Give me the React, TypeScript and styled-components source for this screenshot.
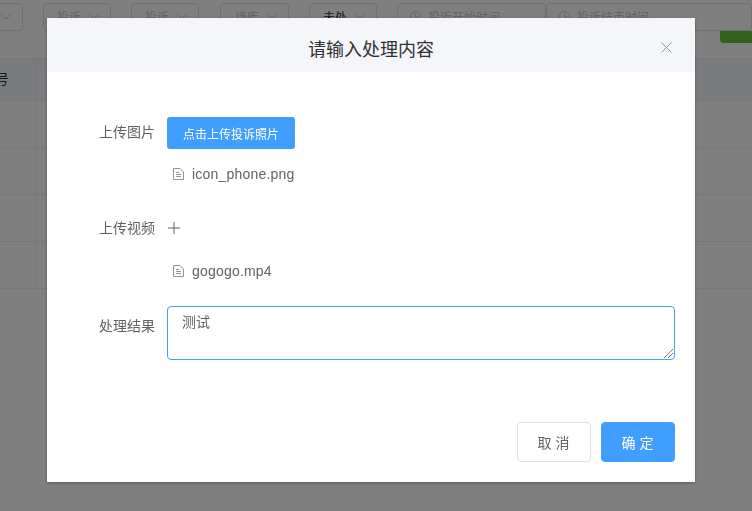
import React from 'react';
import styled, { createGlobalStyle } from 'styled-components';

const GlobalStyle = createGlobalStyle`
  html, body {
    margin: 0;
    padding: 0;
    height: 100%;
    overflow: hidden;
    background: #fff;
    font-family: "Liberation Sans", "Noto Sans CJK SC", sans-serif;
    color: #606266;
  }
`;

const Page = styled.div`
  width: 752px;
  height: 511px;
  overflow: hidden;
`;

const FilterBar = styled.div`
  display: flex;
  align-items: center;
  height: 28px;
  padding-top: 3px;
  margin-left: -45px;
  width: 900px;
`;

const Select = styled.div<{ $width: number; $gap: number; $active?: boolean }>`
  box-sizing: border-box;
  display: flex;
  align-items: center;
  justify-content: flex-end;
  gap: 7px;
  flex: none;
  width: ${(p) => p.$width}px;
  height: 28px;
  margin-right: ${(p) => p.$gap}px;
  padding: 0 10px 2px 0;
  border: 1px solid #dcdfe6;
  border-radius: 4px;
  font-size: 12px;
  color: ${(p) => (p.$active ? '#303133' : '#c0c4cc')};
`;

const DateInput = styled.div<{ $width: number }>`
  box-sizing: border-box;
  display: flex;
  align-items: center;
  gap: 7px;
  flex: none;
  width: ${(p) => p.$width}px;
  height: 28px;
  padding: 0 0 2px 12px;
  border: 1px solid #dcdfe6;
  border-radius: 4px;
  font-size: 12px;
  color: #c0c4cc;
`;

const ActionRow = styled.div`
  display: flex;
  justify-content: flex-end;
  height: 12px;
  margin-bottom: 15px;
`;

const GreenButton = styled.div`
  width: 32px;
  height: 12px;
  background: #67c23a;
  border-radius: 0 0 0 4px;
`;

const Table = styled.div`
  border-top: 1px solid #ebeef5;
`;

const TableRow = styled.div<{ $head?: boolean }>`
  display: grid;
  grid-template-columns: 36px 1fr;
  height: ${(p) => (p.$head ? 41 : 46)}px;
  background: ${(p) => (p.$head ? '#f5f7fa' : '#fff')};
  border-bottom: 1px solid #ebeef5;
`;

const Cell = styled.div`
  display: flex;
  align-items: center;
  justify-content: flex-end;
  overflow: hidden;
  font-size: 14px;
  color: #303133;
  border-right: 1px solid #ebeef5;
  padding: 0 26px 3px 0;
  white-space: nowrap;
`;

const Overlay = styled.div`
  position: fixed;
  inset: 0;
  background: rgba(0, 0, 0, 0.5);
`;

const Dialog = styled.div`
  position: absolute;
  left: 47px;
  top: 18px;
  width: 648px;
  height: 464px;
  display: flex;
  flex-direction: column;
  background: #fff;
  box-shadow: 0 1px 3px rgba(0, 0, 0, 0.3);
`;

const DialogHeader = styled.div`
  position: relative;
  flex: none;
  height: 54px;
  display: flex;
  align-items: center;
  justify-content: center;
  padding-top: 6px;
  box-sizing: border-box;
  background: #f5f6fa;
  font-size: 18px;
  color: #303133;
`;

const CloseButton = styled.svg`
  position: absolute;
  right: 23px;
  top: 24px;
  width: 11px;
  height: 11px;
`;

const DialogBody = styled.div`
  flex: 1;
  display: flex;
  flex-direction: column;
  padding: 45px 20px 0 0;
`;

const FormRow = styled.div<{ $mb: number }>`
  display: grid;
  grid-template-columns: 120px 1fr;
  margin-bottom: ${(p) => p.$mb}px;
`;

const Label = styled.label<{ $mt?: number }>`
  box-sizing: border-box;
  height: 30px;
  margin-top: ${(p) => p.$mt ?? 0}px;
  padding-right: 12px;
  line-height: 30px;
  text-align: right;
  font-size: 14px;
  color: #606266;
`;

const UploadButton = styled.button`
  justify-self: start;
  width: 128px;
  height: 32px;
  padding: 0;
  border: 0;
  border-radius: 3px;
  background: #409eff;
  color: #fff;
  font: inherit;
  font-size: 12px;
`;

const PlusIcon = styled.svg`
  width: 12px;
  height: 12px;
  margin: 9px 0 0 1px;
  display: block;
`;

const FileItem = styled.div<{ $mt: number }>`
  grid-column: 2;
  display: flex;
  align-items: center;
  height: 25px;
  margin-top: ${(p) => p.$mt}px;
  padding-left: 6px;
  gap: 8px;
  font-size: 14px;
  letter-spacing: 0.2px;
  color: #606266;
`;

const Text = styled.div`
  box-sizing: border-box;
  width: 508px;
  height: 54px;
  padding: 5px 14px;
  border: 1px solid #409eff;
  border-radius: 4px;
  font-size: 14px;
  line-height: 21px;
  color: #606266;
  position: relative;
`;

const ResizeGrip = styled.svg`
  position: absolute;
  right: 1px;
  bottom: 1px;
  width: 9px;
  height: 9px;
`;

const DialogFooter = styled.div`
  display: flex;
  justify-content: flex-end;
  gap: 10px;
  padding: 0 20px 20px 0;
`;

const FooterButton = styled.button<{ $primary?: boolean }>`
  box-sizing: border-box;
  width: 74px;
  height: 40px;
  padding: 0 0 0 3px;
  border: 1px solid ${(p) => (p.$primary ? '#409eff' : '#dcdfe6')};
  border-radius: 4px;
  background: ${(p) => (p.$primary ? '#409eff' : '#fff')};
  color: ${(p) => (p.$primary ? '#fff' : '#606266')};
  font: inherit;
  font-size: 14px;
  letter-spacing: 4px;
`;

const Chevron = () => (
  <svg width="12" height="8" viewBox="0 0 12 8" fill="none" stroke="#c0c4cc">
    <path d="M.5 1L6 7l5.5-6" />
  </svg>
);

const Clock = () => (
  <svg width="11" height="11" viewBox="0 0 11 11" fill="none" stroke="#c0c4cc">
    <circle cx="5.5" cy="5.5" r="5" />
    <path d="M5.5 2.5V6H8.5" />
  </svg>
);

const FileIcon = () => (
  <svg width="11" height="12" viewBox="0 0 11 12" fill="none" stroke="#909399">
    <path d="M.5.5H7L10.5 4V11.5H.5z" />
    <path d="M3 4.5H6M3 6.5H8M3 8.5H8" />
  </svg>
);

export default function App() {
  return (
    <Page>
      <GlobalStyle />
      <FilterBar>
        <Select $width={68} $gap={20}><Chevron /></Select>
        <Select $width={68} $gap={20}>投诉<Chevron /></Select>
        <Select $width={68} $gap={21}>投诉<Chevron /></Select>
        <Select $width={69} $gap={20}>场库<Chevron /></Select>
        <Select $width={68} $gap={20} $active>未处<Chevron /></Select>
        <DateInput $width={149}><Clock />投诉开始时间</DateInput>
        <DateInput $width={206}><Clock />投诉结束时间</DateInput>
      </FilterBar>
      <ActionRow><GreenButton /></ActionRow>
      <Table>
        <TableRow $head><Cell>序号</Cell><div /></TableRow>
        <TableRow><Cell /><div /></TableRow>
        <TableRow><Cell /><div /></TableRow>
        <TableRow><Cell /><div /></TableRow>
        <TableRow><Cell /><div /></TableRow>
      </Table>
      <Overlay>
        <Dialog>
          <DialogHeader>
            请输入处理内容
            <CloseButton viewBox="0 0 11 11" fill="none" stroke="#909399">
              <path d="M.5.5l10 10M10.5.5l-10 10" />
            </CloseButton>
          </DialogHeader>
          <DialogBody>
            <FormRow $mb={27}>
              <Label>上传图片</Label>
              <UploadButton>点击上传投诉照片</UploadButton>
              <FileItem $mt={12}><FileIcon />icon_phone.png</FileItem>
            </FormRow>
            <FormRow $mb={23}>
              <Label>上传视频</Label>
              <PlusIcon viewBox="0 0 12 12" fill="none" stroke="#606266">
                <path d="M6 0V12M0 6H12" />
              </PlusIcon>
              <FileItem $mt={15}><FileIcon />gogogo.mp4</FileItem>
            </FormRow>
            <FormRow $mb={0}>
              <Label $mt={5}>处理结果</Label>
              <Text>
                测试
                <ResizeGrip viewBox="0 0 9 9" stroke="#777" fill="none">
                  <path d="M0 9L9 0M4 9L9 4" />
                </ResizeGrip>
              </Text>
            </FormRow>
          </DialogBody>
          <DialogFooter>
            <FooterButton>取消</FooterButton>
            <FooterButton $primary>确定</FooterButton>
          </DialogFooter>
        </Dialog>
      </Overlay>
    </Page>
  );
}
